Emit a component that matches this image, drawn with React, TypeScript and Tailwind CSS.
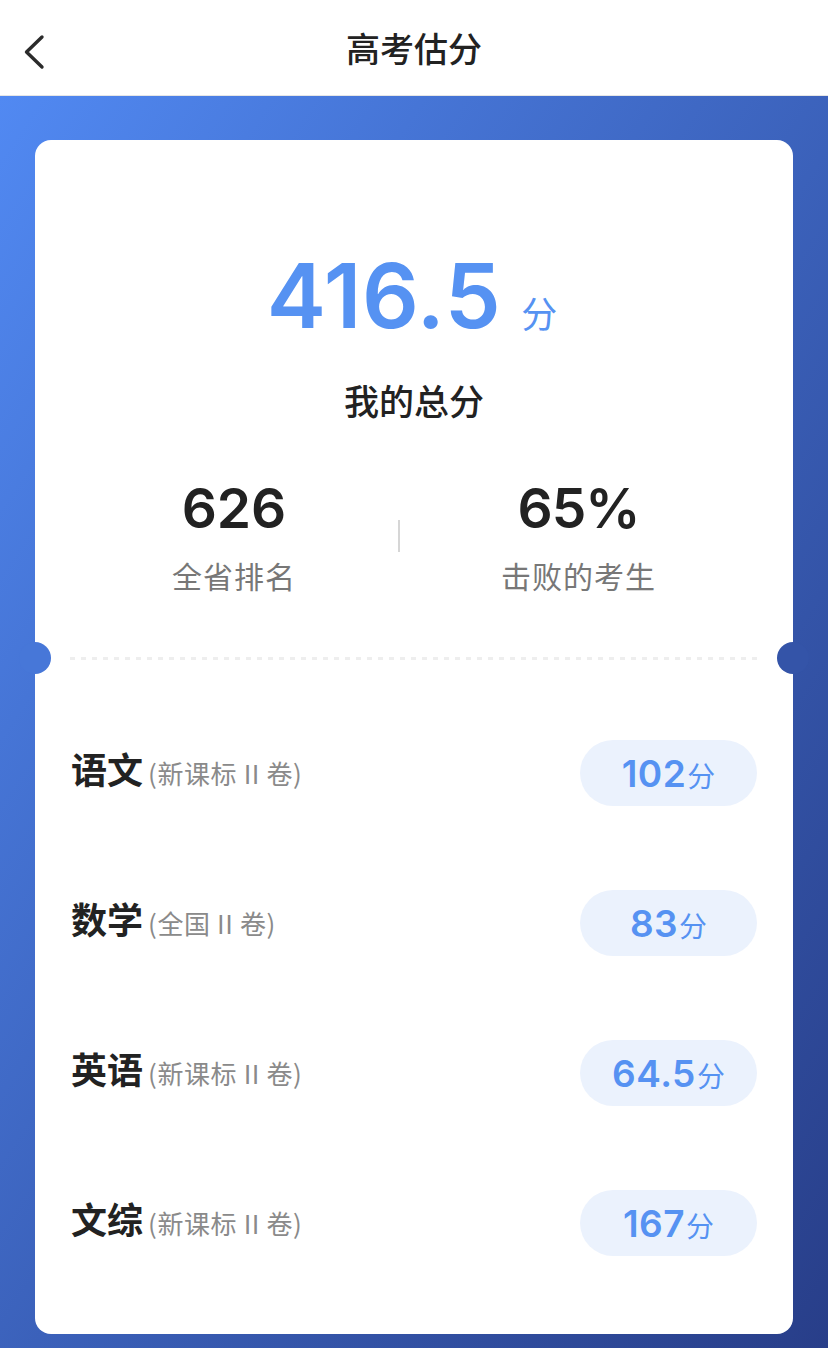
import React from "react";

const FONT = { fontFamily: '"Inter", "Noto Sans CJK SC", sans-serif' };
const CJK = { fontFamily: '"Noto Sans CJK SC", sans-serif' };

const subjects = [
  { name: "语文", note: "(新课标 II 卷)", score: "102" },
  { name: "数学", note: "(全国 II 卷)", score: "83" },
  { name: "英语", note: "(新课标 II 卷)", score: "64.5" },
  { name: "文综", note: "(新课标 II 卷)", score: "167" },
];

export default function App() {
  return (
    <div className="w-[828px] h-[1348px] overflow-hidden bg-white" style={FONT}>
      {/* Header */}
      <div className="relative h-[96px] border-b border-[#e6e6e6] flex items-center justify-center bg-white">
        <svg
          className="absolute left-0 top-0"
          width="60"
          height="96"
          viewBox="0 0 60 96"
          fill="none"
        >
          <polyline
            points="42,37 26.5,52 42,67"
            stroke="#2b2b2b"
            strokeWidth="3.4"
            strokeLinecap="round"
            strokeLinejoin="round"
          />
        </svg>
        <span className="text-[34px] leading-none font-medium text-[#222]" style={CJK}>
          高考估分
        </span>
      </div>

      {/* Gradient area */}
      <div className="h-[1252px] bg-gradient-to-br from-[#5189f2] to-[#283e89] pt-[44px] px-[35px]">
        <div className="relative bg-white rounded-[16px] h-[1194px]">
          {/* Top section */}
          <div className="h-[518px] flex flex-col items-center pt-[111px]">
            <div className="flex items-baseline leading-none ml-[-4px]">
              <span className="text-[89px] font-semibold text-[#5692f2] tracking-[0.5px]">416.5</span>
              <span className="text-[36px] text-[#5692f2] ml-[20px]" style={CJK}>
                分
              </span>
            </div>
            <div className="mt-[42px] text-[35px] leading-none font-medium text-[#222]" style={CJK}>
              我的总分
            </div>
            <div className="mt-[64px] w-full px-[137px] flex items-center justify-between">
              <div className="flex flex-col items-center">
                <span className="text-[55px] leading-none font-semibold text-[#222]">626</span>
                <span className="mt-[24px] text-[30px] leading-none text-[#777] tracking-[1px]" style={CJK}>
                  全省排名
                </span>
              </div>
              <div className="w-[2px] h-[32px] bg-[#d6d6d6]" />
              <div className="flex flex-col items-center">
                <span className="text-[55px] leading-none font-semibold text-[#222] tracking-[-1px]">65%</span>
                <span className="mt-[24px] text-[30px] leading-none text-[#777] tracking-[1px]" style={CJK}>
                  击败的考生
                </span>
              </div>
            </div>
          </div>

          {/* Dashed divider with notches */}
          <div className="relative h-0">
            <div className="absolute left-[-16px] top-[-16px] w-[32px] h-[32px] rounded-full bg-[#4777d8]" />
            <div className="absolute right-[-16px] top-[-16px] w-[32px] h-[32px] rounded-full bg-[#3454a8]" />
            <div
              className="absolute left-[35px] right-[35px] top-[-1px] h-[3px]"
              style={{
                backgroundImage:
                  "repeating-linear-gradient(to right, #eeeeee 0 5px, transparent 5px 11px)",
              }}
            />
          </div>

          {/* Subjects */}
          <div className="pt-[40px] px-[36px] pb-[36px]">
            {subjects.map((s) => (
              <div key={s.name} className="h-[150px] flex items-center justify-between">
                <div className="flex items-baseline leading-none mb-[10px]" style={CJK}>
                  <span className="text-[36px] font-bold text-[#222]">{s.name}</span>
                  <span className="text-[26px] text-[#8a8a8a] ml-[5px] tracking-[0.6px]">{s.note}</span>
                </div>
                <div className="w-[177px] h-[66px] rounded-full bg-[#ebf2fd] flex items-center justify-center">
                  <div className="flex items-baseline leading-none text-[#5692f2]">
                    <span className="text-[37px] font-semibold tracking-[0.5px]">{s.score}</span>
                    <span className="text-[28px] ml-[1px]" style={CJK}>
                      分
                    </span>
                  </div>
                </div>
              </div>
            ))}
          </div>
        </div>
      </div>
    </div>
  );
}
